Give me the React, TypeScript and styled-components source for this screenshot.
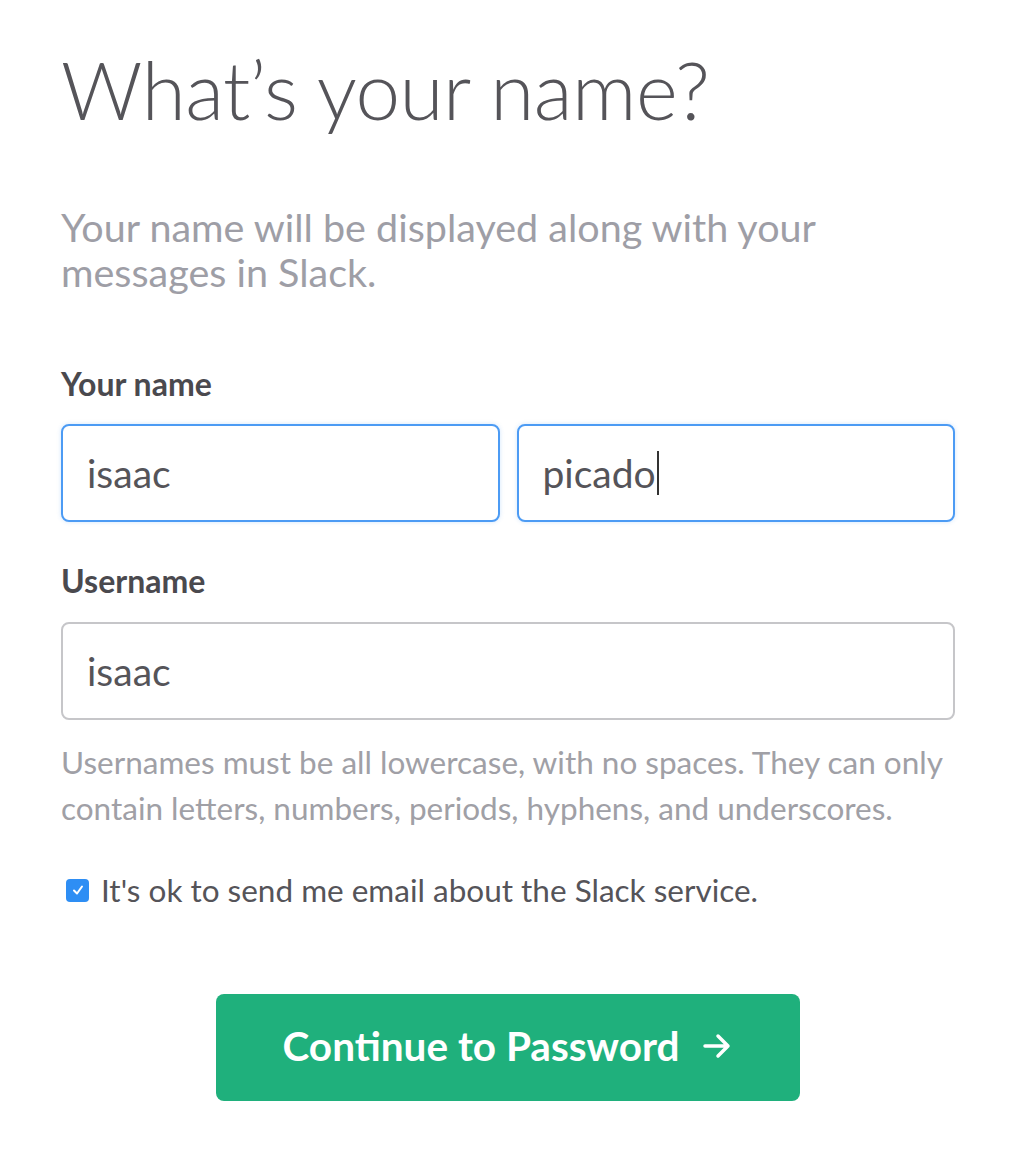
import React from "react";
import styled, { createGlobalStyle } from "styled-components";

const Global = createGlobalStyle`
  html, body { margin: 0; padding: 0; background: #ffffff; }
  body { font-family: Lato, "Open Sans", sans-serif; -webkit-font-smoothing: antialiased; }
  * { box-sizing: border-box; }
`;

const Page = styled.div`
  width: 1030px;
  min-height: 1164px;
  padding: 34px 75px 0 61px;
  display: flex;
  flex-direction: column;
`;

const Heading = styled.h1`
  margin: 0;
  font-family: Lato, sans-serif;
  font-weight: 300;
  font-size: 80px;
  line-height: 110px;
  color: #555459;
  letter-spacing: -0.5px;
`;

const Lead = styled.p`
  margin: 60px 0 0;
  font-size: 39.5px;
  line-height: 45px;
  color: #9e9ea6;
  font-weight: 400;
`;

const Label = styled.label<{ $top: number }>`
  display: block;
  margin-top: ${(p) => p.$top}px;
  font-weight: 700;
  font-size: 32px;
  line-height: 36px;
  color: #4a494e;
`;

const Row = styled.div`
  display: grid;
  grid-template-columns: 1fr 1fr;
  gap: 17px;
  margin-top: 22px;
`;

const Field = styled.div<{ $focused?: boolean }>`
  height: 98px;
  border: 2px solid ${(p) => (p.$focused ? "#4c9bf4" : "#c6c6c9")};
  border-radius: 8px;
  box-shadow: ${(p) => (p.$focused ? "0 0 4px rgba(76,155,244,0.25)" : "none")};
  display: flex;
  align-items: center;
  padding: 0 24px;
  margin-top: ${(p) => (p.$focused ? 0 : 23)}px;
  font-size: 39px;
  color: #555459;
  background: #fff;
`;

const Caret = styled.span`
  display: inline-block;
  width: 2px;
  height: 44px;
  background: #333;
  margin-left: 1px;
  vertical-align: middle;
`;

const Help = styled.p`
  margin: 19px 0 0;
  font-size: 31.5px;
  line-height: 46px;
  color: #a0a0a6;
`;

const CheckRow = styled.label`
  display: flex;
  align-items: center;
  gap: 12px;
  margin-top: 41px;
  padding-left: 5px;
  font-size: 31.5px;
  line-height: 36px;
  color: #555459;
`;

const Box = styled.span`
  width: 23px;
  height: 23px;
  border-radius: 4px;
  background: #2e8ef4;
  display: inline-flex;
  align-items: center;
  justify-content: center;
  flex: none;
`;

const ButtonWrap = styled.div`
  display: flex;
  justify-content: center;
  margin-top: 86px;
`;

const Button = styled.button`
  width: 584px;
  height: 107px;
  border: none;
  border-radius: 8px;
  background: #1fb07c;
  color: #fff;
  font-family: Lato, sans-serif;
  font-weight: 700;
  font-size: 40.5px;
  display: flex;
  align-items: center;
  justify-content: center;
  gap: 22px;
  padding: 0 0 4px 0;
`;

export default function App() {
  return (
    <>
      <Global />
      <Page>
        <Heading>What’s your name?</Heading>
        <Lead>
          Your name will be displayed along with your
          <br />
          messages in Slack.
        </Lead>
        <Label $top={72}>Your name</Label>
        <Row>
          <Field $focused>isaac</Field>
          <Field $focused>
            picado
            <Caret />
          </Field>
        </Row>
        <Label $top={41}>Username</Label>
        <Field>isaac</Field>
        <Help>
          Usernames must be all lowercase, with no spaces. They can only
          <br />
          contain letters, numbers, periods, hyphens, and underscores.
        </Help>
        <CheckRow>
          <Box>
            <svg width="14" height="14" viewBox="0 0 14 14">
              <path d="M3 7.5 L6 10.5 L11 3.5" fill="none" stroke="#fff" strokeWidth="2" strokeLinecap="round" strokeLinejoin="round" />
            </svg>
          </Box>
          It's ok to send me email about the Slack service.
        </CheckRow>
        <ButtonWrap>
          <Button>
            Continue to Password
            <svg width="32" height="28" viewBox="0 0 32 28">
              <path d="M4 14 H27 M17 4 L27 14 L17 24" fill="none" stroke="#fff" strokeWidth="3.5" strokeLinecap="round" strokeLinejoin="round" />
            </svg>
          </Button>
        </ButtonWrap>
      </Page>
    </>
  );
}
